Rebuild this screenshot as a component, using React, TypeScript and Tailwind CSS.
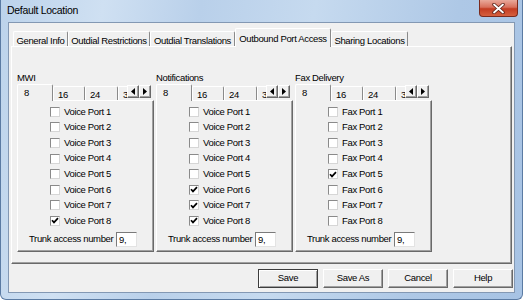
import React from "react";

type Group = {
  title: string;
  prefix: string;
  checked: number[];
};

const GROUPS: Group[] = [
  { title: "MWI", prefix: "Voice Port", checked: [8] },
  { title: "Notifications", prefix: "Voice Port", checked: [6, 7, 8] },
  { title: "Fax Delivery", prefix: "Fax Port", checked: [5] },
];

const MAIN_TABS = [
  { label: "General Info", w: "w-[55px]" },
  { label: "Outdial Restrictions", w: "w-[82px]" },
  { label: "Outdial Translations", w: "w-[85px]" },
  { label: "Outbound Port Access", w: "w-[96px]", active: true },
  { label: "Sharing Locations", w: "w-[77px]" },
];

// classic 3d edges
const raised =
  "border border-t-white border-l-white border-r-[#696969] border-b-[#696969] shadow-[inset_-1px_-1px_0_#a0a0a0]";
const tabEdge =
  "border-l border-t border-r border-l-white border-t-white border-r-[#8a8a8a] rounded-t-[2px]";

function Check({ on }: { on: boolean }) {
  return (
    <span className="w-[10px] h-[10px] flex-none flex items-center justify-center bg-white border border-t-[#8a8a8a] border-l-[#8a8a8a] border-r-[#d6d6d6] border-b-[#d6d6d6]">
      {on && (
        <svg width="8" height="7" viewBox="0 0 8 7">
          <path d="M1 3.2 L3 5.4 L7 1.2" stroke="#000" strokeWidth="1.7" fill="none" />
        </svg>
      )}
    </span>
  );
}

function Arrow({ dir }: { dir: "l" | "r" }) {
  return (
    <span className={`w-[12px] h-[13px] flex items-center justify-center bg-[#f0f0f0] ${raised}`}>
      <svg width="4" height="7" viewBox="0 0 4 7">
        <path d={dir === "l" ? "M4 0 L0 3.5 L4 7 Z" : "M0 0 L4 3.5 L0 7 Z"} fill="#000" />
      </svg>
    </span>
  );
}

function PortGroup({ group }: { group: Group }) {
  return (
    <div className="w-[137px] flex flex-col">
      <div className="h-[13px] leading-[13px]">{group.title}</div>
      {/* inner tab strip */}
      <div className="h-[16px] flex items-end">
        <div className={`w-[36px] h-[17px] -mb-px relative z-10 bg-[#f0f0f0] pl-[6px] pt-[1px] ${tabEdge}`}>8</div>
        <div className={`w-[32px] h-[14px] pl-[4px] pt-[1px] ${tabEdge}`}>16</div>
        <div className={`w-[33px] h-[14px] pl-[4px] pt-[1px] ${tabEdge}`}>24</div>
        <div className="w-[9px] h-[14px] pl-[4px] pt-[1px] overflow-hidden border-l border-t border-l-white border-t-white">32</div>
        <div className="flex self-start mt-[1px]">
          <Arrow dir="l" />
          <Arrow dir="r" />
        </div>
      </div>
      {/* inner panel */}
      <div className={`h-[152px] flex flex-col pt-[3px] ${raised}`}>
        {[1, 2, 3, 4, 5, 6, 7, 8].map((n) => (
          <div key={n} className="h-[15.6px] flex items-center pl-[32px] gap-[4px]">
            <Check on={group.checked.includes(n)} />
            <span>
              {group.prefix} {n}
            </span>
          </div>
        ))}
        <div className="flex items-center mt-[3px] pl-[11px]">
          <span className="w-[82px] whitespace-nowrap">Trunk access number</span>
          <span className="ml-[5px] w-[21px] h-[15px] leading-[13px] pl-[2px] bg-white border border-t-[#7a7a7a] border-l-[#7a7a7a] border-r-[#e3e3e3] border-b-[#e3e3e3]">
            9,
          </span>
        </div>
      </div>
    </div>
  );
}

function CloseButton() {
  return (
    <div className="w-[39px] h-[17px] mr-[4px] self-start flex items-center justify-center rounded-b-[4px] border border-t-0 border-[#7b2a1d] bg-[linear-gradient(180deg,#e9a99b_0%,#d8705c_45%,#c33c22_55%,#d5603f_100%)]">
      <svg width="13" height="11" viewBox="0 0 13 11">
        <path d="M2 1.5 L11 9.5 M11 1.5 L2 9.5" stroke="#5a2016" strokeWidth="3.4" strokeLinecap="round" />
        <path d="M2 1.5 L11 9.5 M11 1.5 L2 9.5" stroke="#fff" strokeWidth="1.8" strokeLinecap="round" />
      </svg>
    </div>
  );
}

export default function App() {
  return (
    <div className="w-[523px] h-[300px] flex flex-col overflow-hidden rounded-b-[6px] border-x border-b border-[#5b7ba3] bg-[linear-gradient(100deg,#bcd3eb_0%,#cfe0f2_18%,#b9d0ea_35%,#c6daef_55%,#aec8e6_80%,#a7c3e4_100%)] font-['Liberation_Sans',Arial,sans-serif] text-[9.5px] tracking-[-0.35px] text-black">
      {/* title bar */}
      <div className="h-[22px] flex-none flex items-center justify-between">
        <span className="pl-[6px] text-[10.5px] tracking-[-0.3px]">Default Location</span>
        <CloseButton />
      </div>

      {/* client area */}
      <div className="mx-[7px] h-[271px] flex-none flex flex-col bg-[#f0f0f0] border border-[#8398b3]">
        {/* tab strip */}
        <div className="h-[23px] flex items-end pl-[4px]">
          {MAIN_TABS.map((t) =>
            t.active ? (
              <div
                key={t.label}
                className={`${t.w} h-[19px] -mb-px relative z-10 bg-[#f0f0f0] flex justify-center pt-[3px] ${tabEdge}`}
              >
                {t.label}
              </div>
            ) : (
              <div key={t.label} className={`${t.w} h-[15px] flex justify-center pt-[2px] ${tabEdge}`}>
                {t.label}
              </div>
            )
          )}
        </div>

        {/* tab page */}
        <div className={`mx-[2px] h-[218px] pt-[24px] pl-[5px] flex gap-[2px] ${raised}`}>
          {GROUPS.map((g) => (
            <PortGroup key={g.title} group={g} />
          ))}
        </div>

        {/* dialog buttons */}
        <div className="flex justify-end gap-[5px] pr-[1px] mt-[5px]">
          {["Save", "Save As", "Cancel", "Help"].map((b) => (
            <div
              key={b}
              className={`w-[60px] h-[19px] flex items-center justify-center bg-[#f0f0f0] ${
                b === "Save"
                  ? "border border-[#3d3d3d] shadow-[inset_1px_1px_0_#fff,inset_-1px_-1px_0_#a0a0a0]"
                  : raised
              }`}
            >
              {b}
            </div>
          ))}
        </div>
      </div>
    </div>
  );
}
